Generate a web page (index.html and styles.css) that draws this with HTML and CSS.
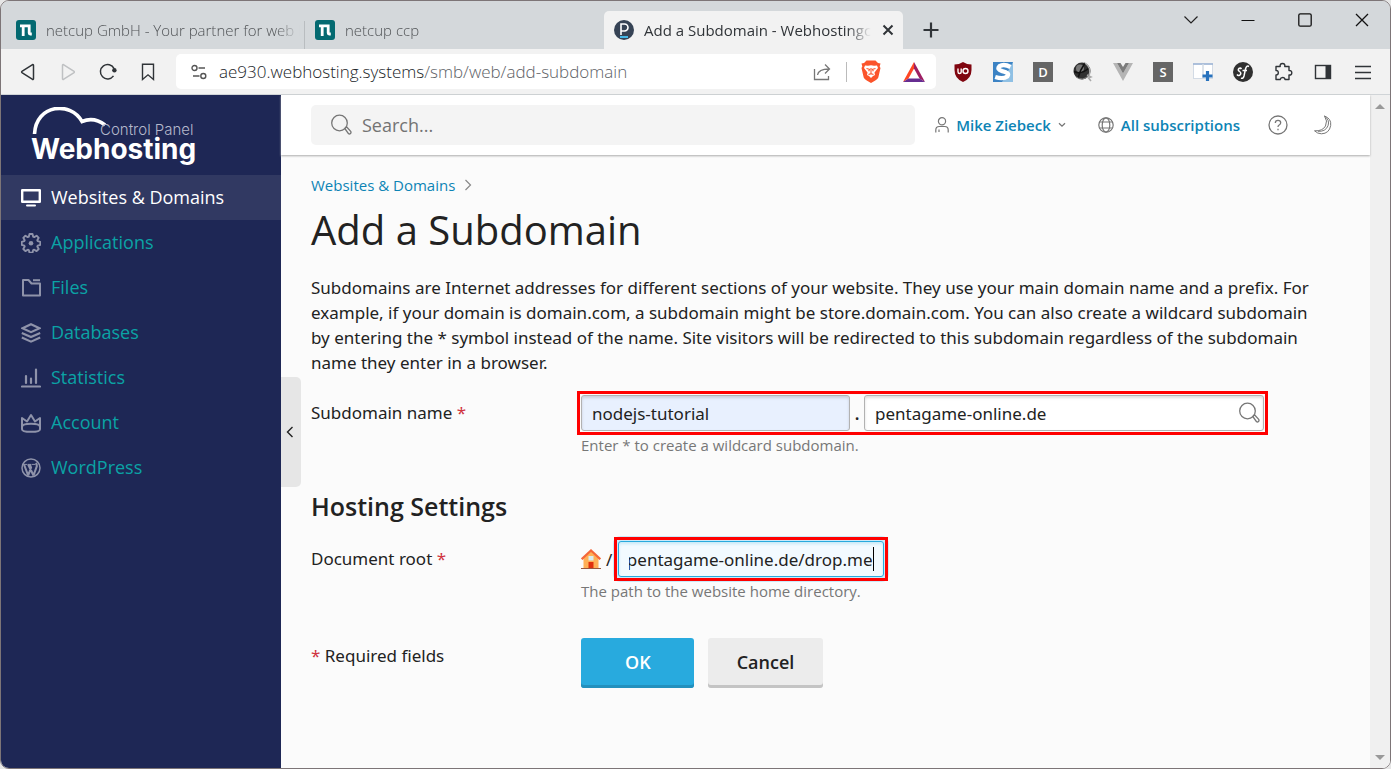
FILE: index.html
```html
<!DOCTYPE html>
<html lang="en">
<head>
<meta charset="utf-8">
<title>Add a Subdomain - Webhosting</title>
<link rel="stylesheet" href="styles.css">
</head>
<body>
<div class="window">
  <header class="tabstrip">
    <div class="tab">
      <svg class="favicon" viewBox="0 0 20 20"><rect width="20" height="20" rx="3" fill="#046a71"/><path d="M4 5.800h9.200v7.200q0 1 1 1h1.600M7.200 5.800V16" fill="none" stroke="#fff" stroke-width="2.800"/></svg>
      <span class="tab-title">netcup GmbH - Your partner for web h</span>
    </div>
    <div class="tab tab-second">
      <svg class="favicon" viewBox="0 0 20 20"><rect width="20" height="20" rx="3" fill="#046a71"/><path d="M4 5.800h9.200v7.200q0 1 1 1h1.600M7.200 5.800V16" fill="none" stroke="#fff" stroke-width="2.800"/></svg>
      <span class="tab-title">netcup ccp</span>
    </div>
    <div class="tab tab-active">
      <svg class="favicon" viewBox="0 0 20 20"><circle cx="10" cy="10" r="10" fill="#364355"/><path d="M7 15V4h3.500a3.300 3.300 0 0 1 0 7H7" fill="none" stroke="#fff" stroke-width="1.600"/><path d="M6 17h8" stroke="#45b8e8" stroke-width="2"/></svg>
      <span class="tab-title">Add a Subdomain - Webhostingc</span>
      <button class="plain tab-close" aria-label="Close tab"><svg width="12" height="12" viewBox="0 0 12 12"><path d="M1.500 1.500l9 9m0-9l-9 9" stroke="#303438" stroke-width="2"/></svg></button>
    </div>
    <button class="plain new-tab" aria-label="New tab"><svg width="16" height="16" viewBox="0 0 16 16"><path d="M8 .500v15M.500 8h15" stroke="#303438" stroke-width="2.200"/></svg></button>
    <div class="window-controls">
      <button class="plain" aria-label="Search tabs"><svg width="14" height="14" viewBox="0 0 14 14"><path d="M.500 3.500L7 10l6.500-6.500" fill="none" stroke="#222" stroke-width="1.200"/></svg></button>
      <button class="plain" aria-label="Minimize"><svg width="14" height="14" viewBox="0 0 14 14"><path d="M.500 7.500h13" stroke="#111" stroke-width="1.200"/></svg></button>
      <button class="plain" aria-label="Maximize"><svg width="14" height="14" viewBox="0 0 14 14"><rect x=".8" y=".8" width="12.400" height="12.400" rx="1.500" fill="none" stroke="#111" stroke-width="1.300"/></svg></button>
      <button class="plain" aria-label="Close window"><svg width="14" height="14" viewBox="0 0 14 14"><path d="M1 1l12 12M13 1L1 13" stroke="#111" stroke-width="1.300"/></svg></button>
    </div>
  </header>

  <div class="toolbar">
    <div class="nav-buttons">
      <button class="plain" aria-label="Back"><svg width="20" height="20" viewBox="0 0 20 20"><path d="M14.200 2.800L4.300 9q-1.400 1 0 2l9.900 6.200q1.300.6 1.300-.8V3.600q0-1.400-1.300-.8z" fill="none" stroke="#303438" stroke-width="1.500"/></svg></button>
      <button class="plain" aria-label="Forward"><svg width="20" height="20" viewBox="0 0 20 20"><path d="M5.800 2.800L15.700 9q1.400 1 0 2l-9.900 6.200q-1.300.6-1.300-.8V3.600q0-1.400 1.300-.8z" fill="none" stroke="#bfc1c3" stroke-width="1.500"/></svg></button>
      <button class="plain" aria-label="Reload"><svg width="20" height="20" viewBox="0 0 20 20"><path d="M15.500 13.900a7.200 7.200 0 1 1 .6-7.300" fill="none" stroke="#303438" stroke-width="1.500"/><circle cx="16.400" cy="8.300" r="2.200" fill="#303438"/></svg></button>
      <button class="plain" aria-label="Bookmark"><svg width="20" height="20" viewBox="0 0 20 20"><path d="M4.500 2.300h11v15.200L10 12.800l-5.500 4.700z" fill="none" stroke="#303438" stroke-width="1.400"/></svg></button>
    </div>
    <div class="address">
      <svg width="16" height="16" viewBox="0 0 16 16"><g fill="none" stroke="#555" stroke-width="1.400"><circle cx="3.500" cy="4" r="2.500"/><path d="M7.500 4H14M2 12h6.500"/><circle cx="12.300" cy="12" r="2.500"/></g></svg>
      <div class="url">ae930.webhosting.systems<span>/smb/web/add-subdomain</span></div>
      <button class="plain" aria-label="Share"><svg width="20" height="20" viewBox="0 0 20 20"><path d="M2.500 7v10.500h14V14M5.500 13q1-6 11.500-6M13 2.500L17.500 7 13 11.500" fill="none" stroke="#777" stroke-width="1.300"/></svg></button>
      <i class="address-rule"></i>
      <button class="plain" aria-label="Brave Shields"><svg width="20" height="23" viewBox="0 0 20 23"><path d="M5.500.500h9L17 3l2.500.5-.8 3 .8 1.500-2.200 9.500q-.5 1.500-3 3L10 23l-4.300-2.500q-2.500-1.500-3-3L.500 8l.8-1.500-.8-3L3 3z" fill="#fb542b"/><path d="M4 5.500l3 .3 3-.6 3 .6 3-.3 1 2.500-3.500 4.500.5 2.500-2 1-2 2-2-2-2-1 .5-2.500L3 8z" fill="#fff"/><path d="M5.500 8.500l3 .8-.8 2M14.500 8.500l-3 .8.800 2M7.500 14.500L10 13.700l2.500.8M10 8v5" fill="none" stroke="#fb542b" stroke-width="1.100"/></svg></button>
      <button class="plain" aria-label="Rewards"><svg width="22" height="20" viewBox="0 0 22 20"><path d="M11 0L0 20l5.500-3.500L11 6.500z" fill="#ff4724"/><path d="M11 0l11 20-5.500-3.500L11 6.500z" fill="#9e1f63"/><path d="M0 20h22l-5.500-3.500h-11z" fill="#662d91"/></svg></button>
    </div>
    <div class="extensions">
      <button class="plain" aria-label="uBlock Origin"><svg width="20" height="20" viewBox="0 0 20 20"><path d="M10 0q4 2.500 8.500 2.500V8q0 8.500-8.500 12Q1.500 16.500 1.500 8V2.500Q6 2.500 10 0z" fill="#800610"/><path d="M5 6.500v3.200q0 1.800 1.600 1.800t1.600-1.800V6.500v4" fill="none" stroke="#fff" stroke-width="1.400"/><circle cx="12.500" cy="9" r="2.500" fill="none" stroke="#fff" stroke-width="1.400"/></svg></button>
      <button class="plain" aria-label="Stylus"><svg width="20" height="20" viewBox="0 0 20 20"><rect width="20" height="20" fill="#3c83c4"/><path d="M20 0v20H9z" fill="#8fc0e4"/><path d="M17.500 5Q11 1.500 6.500 4.200q-3 3.200 2.700 5 8 1.600 5 5.300-4 3-12 .5" fill="none" stroke="#fff" stroke-width="4.400"/></svg></button>
      <button class="plain letter" aria-label="D extension">D</button>
      <button class="plain" aria-label="Globe extension"><svg width="20" height="20" viewBox="0 0 20 20"><circle cx="9" cy="9" r="8.500" fill="#303030"/><circle cx="7" cy="6.500" r="4" fill="#777"/><path d="M1 9.500Q8 13 16 6M5 16Q7 8 12 1" fill="none" stroke="#111" stroke-width="1.500"/><path d="M12 1q7 5 4 13M14 13l4 2-2.500 1 2.500 3" fill="none" stroke="#aaa" stroke-width="1.500"/><path d="M3 15q7 5 13-2" fill="none" stroke="#888"/></svg></button>
      <button class="plain" aria-label="Vue devtools"><svg width="20" height="20" viewBox="0 0 20 20"><path d="M0 1h4l6 10.500L16 1h4L10 19z" fill="#b5b5b5"/><path d="M4 1h3.500L10 5l2.500-4H16l-6 10.500z" fill="#7c7c7c"/></svg></button>
      <button class="plain letter" aria-label="S extension">S</button>
      <button class="plain" aria-label="Add panel"><svg width="20" height="20" viewBox="0 0 20 20"><rect x=".5" y="2" width="19" height="14.500" fill="#fff" stroke="#d3dbe5"/><path d="M0 2h20" stroke="#9ab2d5" stroke-width="1.500"/><path d="M10 2v14" stroke="#d3dbe5" stroke-width="1.500"/><path d="M14.500 9v10M9.500 14h10" stroke="#2872bd" stroke-width="3.200"/></svg></button>
      <button class="plain" aria-label="Symfony"><svg width="20" height="20" viewBox="0 0 20 20"><circle cx="10" cy="10" r="10" fill="#303030"/><path d="M8.500 7q-1-1.500-2.600-.5-1.500 1.500.6 3 2.500 1.700.3 3.600-1.800 1-2.800-.6M16 4.500q-2.500-1.500-3.500 2.500L11 14q-.8 3-3 2.200M9.500 8.500H14" fill="none" stroke="#fff" stroke-width="1.500"/></svg></button>
      <button class="plain" aria-label="Extensions"><svg width="20" height="20" viewBox="0 0 20 20"><path d="M3 4.500h4.200q-.5-3 2.300-3t2.300 3H16v4q2.800-.2 2.800 2.300T16 13v4.500h-4q-.2-2-2.300-2t-2.500 2H3V13q2.300 0 2.300-2.300T3 8.500z" fill="none" stroke="#303438" stroke-width="1.400" stroke-linejoin="round"/></svg></button>
      <button class="plain" aria-label="Sidebar"><svg width="20" height="20" viewBox="0 0 20 20"><rect x="2.500" y="3.500" width="15" height="13" fill="none" stroke="#303438" stroke-width="1.400"/><path d="M12.500 3H18v14h-5.500z" fill="#303438"/></svg></button>
      <button class="plain" aria-label="Menu"><svg width="20" height="20" viewBox="0 0 20 20"><path d="M2 4.500h16M2 10.500h16M2 16.500h16" stroke="#303438" stroke-width="1.300"/></svg></button>
    </div>
  </div>

  <div class="page">
    <aside class="sidebar">
      <div class="logo">
        <svg class="logo-cloud" width="76" height="28" viewBox="0 0 76 28"><path d="M2.500 27C4 -3 39 -6 50 14.500Q62 9.500 73 18" fill="none" stroke="#fff" stroke-width="3.600"/></svg>
        <span class="logo-sub">Control Panel</span>
        <span class="logo-name">Webhosting</span>
      </div>
      <nav class="menu">
        <a class="current" href="#"><svg viewBox="0 0 20 20"><path d="M1.200 2.200h17.600v11.600H1.200z" fill="none" stroke="currentColor" stroke-width="2.400" stroke-linejoin="round"/><path d="M6 17.500h8" stroke="currentColor" stroke-width="2" stroke-linecap="round"/></svg>Websites &amp; Domains</a>
        <a href="#"><svg viewBox="0 0 20 20"><path d="M8.500 1h3l.7 2.700 1 .4 2.400-1.400 2.100 2.100-1.400 2.400.4 1 2.600.7v3l-2.600.7-.4 1 1.400 2.400-2.100 2.100-2.400-1.400-1 .4-.7 2.600h-3l-.7-2.600-1-.4-2.400 1.400L2.300 16l1.400-2.400-.4-1L.700 11.900v-3l2.600-.7.4-1L2.300 4.800l2.100-2.100 2.400 1.400 1-.4z" fill="none" stroke="currentColor" stroke-width="1.900" stroke-linejoin="round"/><circle cx="10" cy="10.300" r="2.300" fill="currentColor"/></svg>Applications</a>
        <a href="#"><svg viewBox="0 0 20 20"><path d="M2 2h5.500l3 3.500H19V17.500H2z" fill="none" stroke="currentColor" stroke-width="2" stroke-linejoin="round"/><path d="M12 2.200h7" stroke="currentColor" stroke-width="2"/></svg>Files</a>
        <a href="#"><svg viewBox="0 0 20 20"><path d="M10 1.200l8.500 4-8.500 4-8.500-4zM.800 10L10 14l9.200-4M.800 14.500L10 18.700l9.200-4.200" fill="none" stroke="currentColor" stroke-width="2.100"/></svg>Databases</a>
        <a href="#"><svg viewBox="0 0 20 20"><path d="M1 18.500h18M5 15V8M10 15v-4.500M15 15V1.500" fill="none" stroke="currentColor" stroke-width="2.200" stroke-linecap="round"/></svg>Statistics</a>
        <a href="#"><svg viewBox="0 0 20 20"><path d="M1 14V5l5 3.500L10 2l4 6.500L19 5v9M1 14c0-4.500 18-4.500 18 0v2.200c0 3.500-18 3.500-18 0z" fill="none" stroke="currentColor" stroke-width="2" stroke-linejoin="round"/></svg>Account</a>
        <a href="#"><svg viewBox="0 0 20 20"><circle cx="10" cy="10" r="9" fill="none" stroke="currentColor" stroke-width="1.500"/><path d="M3 6.500l4.200 11M7.200 17.500L10 9.500 8.800 6.500M7.200 6.500l5.300 11M12.500 17.500l3.300-9.200q.3-2-1-3.300" fill="none" stroke="currentColor" stroke-width="2.100"/><path d="M2 6.400h4M6.500 6.400h4M11 6.400h3.500" stroke="currentColor"/></svg>WordPress</a>
      </nav>
    </aside>

    <main class="content">
      <button class="plain collapse" aria-label="Collapse sidebar"><svg width="8" height="12" viewBox="0 0 8 12"><path d="M6.500 1L1.500 6l5 5" fill="none" stroke="#222" stroke-width="1.400"/></svg></button>
      <div class="topbar">
        <label class="search">
          <svg width="22" height="22" viewBox="0 0 22 22"><g fill="none" stroke="#777" stroke-width="1.300"><circle cx="9.500" cy="9" r="7.800"/><path d="M14.800 14.500l1.700-1.700 4.200 4.600q.7 1.200-.2 2.100t-2 .2z"/></g></svg>
          <input type="search" placeholder="Search..." aria-label="Search">
        </label>
        <a class="top-link user" href="#"><svg width="14" height="16" viewBox="0 0 14 16"><g fill="none" stroke="#777" stroke-width="1.200"><circle cx="7" cy="4.300" r="3.600"/><path d="M.800 15.500V13q0-3.500 3.400-3.500h5.600q3.400 0 3.400 3.500v2.500M4 12.500V15"/></g></svg>Mike Ziebeck<svg class="caret-down" width="8" height="6" viewBox="0 0 8 6"><path d="M1 1.200l3 3 3-3" fill="none" stroke="#777" stroke-width="1.300"/></svg></a>
        <a class="top-link subs" href="#"><svg width="16" height="16" viewBox="0 0 16 16"><g fill="none" stroke="#777" stroke-width="1.200"><circle cx="8" cy="8" r="7.200"/><ellipse cx="8" cy="8" rx="3.800" ry="7.200"/><path d="M1.500 5h13M1.500 11h13"/></g></svg>All subscriptions</a>
        <button class="plain" aria-label="Help"><svg width="20" height="20" viewBox="0 0 20 20"><g fill="none" stroke="#777" stroke-width="1.300"><circle cx="10" cy="10" r="9"/><path d="M7.300 8q0-2.700 2.700-2.700t2.700 2.500q0 1.300-1.500 2.200-1.200.7-1.200 2M10 13.700v1.500"/></g></svg></button>
        <button class="plain moon" aria-label="Dark mode"><svg width="20" height="20" viewBox="0 0 20 20"><path d="M11.500 1q7 2.500 6.200 9.500-1.400 8-9.200 8.300-4 0-7-3 8 .5 11-4.800 2.500-5-1-10zM11.500 1q5.500 4 3.500 9.800-2.500 6-10 5.500" fill="none" stroke="#777" stroke-width="1"/></svg></button>
      </div>

      <form class="body">
        <nav class="breadcrumb"><a href="#">Websites &amp; Domains</a><svg width="8" height="12" viewBox="0 0 8 12"><path d="M1.500 1l5 5-5 5" fill="none" stroke="#888" stroke-width="1.200"/></svg></nav>
        <h1>Add a Subdomain</h1>
        <p class="intro">Subdomains are Internet addresses for different sections of your website. They use your main domain name and a prefix. For example, if your domain is domain.com, a subdomain might be store.domain.com. You can also create a wildcard subdomain by entering the * symbol instead of the name. Site visitors will be redirected to this subdomain regardless of the subdomain name they enter in a browser.</p>

        <div class="row">
          <label for="name">Subdomain name <em>*</em></label>
          <div class="field">
            <div class="controls marked">
              <input class="box name" id="name" type="text" value="nodejs-tutorial">
              <span class="dot">.</span>
              <div class="domain">
                <input class="box" type="text" value="pentagame-online.de" aria-label="Parent domain">
                <svg width="22" height="22" viewBox="0 0 22 22"><g fill="none" stroke="#777" stroke-width="1.300"><circle cx="9.500" cy="9" r="7.800"/><path d="M14.800 14.500l1.700-1.700 4.200 4.600q.7 1.200-.2 2.100t-2 .2z"/></g></svg>
              </div>
            </div>
            <p class="hint">Enter * to create a wildcard subdomain.</p>
          </div>
        </div>

        <h2>Hosting Settings</h2>

        <div class="row">
          <label for="root">Document root <em>*</em></label>
          <div class="field">
            <div class="controls">
              <svg class="home" width="20" height="20" viewBox="0 0 20 20"><path d="M2.500 9L10 2l7.500 7v10h-15z" fill="#ffb057"/><path d="M.700 10.200L10 1.500l9.300 8.700" fill="none" stroke="#f4673a" stroke-width="2.200"/><path d="M7.500 7h5v4.500h-5z" fill="#d9edf0"/><path d="M7.500 13h5v6h-5z" fill="#e0310f"/><path d="M0 19.500h20" stroke="#98593f"/></svg>
              <span class="slash">/</span>
              <div class="root marked">
                <input class="box" id="root" type="text" value="nodejs-pentagame-online.de/drop.me">
                <i class="text-cursor"></i>
              </div>
            </div>
            <p class="hint">The path to the website home directory.</p>
          </div>
        </div>

        <div class="row actions">
          <span class="required"><em>*</em> Required fields</span>
          <div class="buttons">
            <button class="button ok" type="button">OK</button>
            <button class="button cancel" type="button">Cancel</button>
          </div>
        </div>
      </form>
    </main>

    <div class="scrollbar"><i class="arrow up"></i><i class="arrow down"></i></div>
  </div>
</div>
<script src="script.js"></script>
</body>
</html>
```
FILE: styles.css
```css
* { box-sizing: border-box; }
html, body { height: 100%; }
body {
  margin: 0;
  background: #e6e6e6;
  color: #222;
  font: 400 18px/25px "Open Sans", "Noto Sans", sans-serif;
}
a { color: #0d84b5; text-decoration: none; }
svg { display: block; flex: none; }
em { color: #d0343f; font-style: normal; }
.plain {
  display: flex;
  align-items: center;
  justify-content: center;
  padding: 0;
  border: 0;
  background: none;
}

.window {
  display: flex;
  flex-direction: column;
  min-height: 100vh;
  overflow: hidden;
  border: 1px solid #7d7577;
  border-radius: 9px;
}

/* Tabs */
.tabstrip {
  display: flex;
  flex: none;
  height: 48px;
  padding-top: 10px;
  background: #d4d8db;
}
.tab {
  display: flex;
  align-items: center;
  gap: 10px;
  width: 299px;
  padding: 0 5px 0 10px;
  color: #505356;
  font-size: 15px;
  font-weight: 300;
}
.tab:first-child { width: 304px; padding-left: 15px; background: linear-gradient(#b9bdc0, #b9bdc0) right bottom / 1px 28px no-repeat; }
.favicon { width: 20px; height: 20px; }
.tab-title {
  flex: 1;
  overflow: hidden;
  white-space: nowrap;
  mask-image: linear-gradient(to right, #000 calc(100% - 24px), transparent);
}
.tab-active {
  padding-right: 8px;
  border-radius: 5px 5px 0 0;
  background: #f2f2f2;
  color: #303438;
  font-weight: 400;
}
.tab-close { width: 14px; height: 20px; }
.new-tab { width: 30px; margin-left: 13px; }
.window-controls { display: flex; gap: 43px; height: 18px; margin-left: auto; padding-right: 21px; }

/* Address bar */
.toolbar {
  display: flex;
  align-items: center;
  flex: none;
  height: 46px;
  padding: 0 17px;
  border-bottom: 1px solid #d0d4d7;
  background: #f2f2f2;
}
.nav-buttons { display: flex; gap: 20px; margin-right: 18px; }
.address {
  display: flex;
  align-items: center;
  flex: 1;
  height: 35px;
  padding: 0 11px 0 15px;
  border-radius: 5px;
  background: #fff;
}
.url { flex: 1; margin-left: 12px; color: #202428; font-size: 17px; font-weight: 300; white-space: nowrap; }
.url span { color: #5d6166; }
.address-rule { width: 1px; height: 20px; margin: 0 14px; background: #bbb; }
.address .address-rule + .plain { margin-right: 22px; }
.extensions { display: flex; gap: 20px; margin-left: 17px; }
.letter {
  width: 20px;
  height: 20px;
  background: #666;
  color: #fff;
  font: 600 13px/20px "Open Sans", sans-serif;
}

/* Page */
.page { display: flex; flex: 1; background: #fbfbfb; }
.sidebar { flex: none; width: 280px; background: #1e2755; }
.logo { position: relative; height: 80px; color: #fff; white-space: nowrap; }
.logo-cloud { position: absolute; left: 31px; top: 12px; }
.logo-sub { position: absolute; left: 99px; top: 28px; color: #b4b8cb; font: 300 15px/14px Inter, sans-serif; }
.logo-name { position: absolute; left: 30px; top: 42px; font: 700 28px/24px Inter, sans-serif; }
.menu a {
  display: flex;
  align-items: center;
  gap: 10px;
  height: 45px;
  padding-left: 20px;
  color: #0ba3a5;
}
.menu svg { width: 20px; height: 20px; color: #8f93aa; }
.menu .current { background: #313962; color: #fff; }
.menu .current svg { color: #fff; }

.content { position: relative; flex: 1; min-width: 0; }
.collapse {
  position: absolute;
  left: 0;
  top: 282px;
  width: 20px;
  height: 110px;
  padding-right: 2px;
  border-radius: 0 5px 5px 0;
  background: #e6e6e6;
}
.topbar {
  display: flex;
  align-items: center;
  height: 60px;
  padding: 0 37px 0 30px;
  background: #fff;
  box-shadow: 0 1px 2px #aaa;
}
.search {
  display: flex;
  align-items: center;
  gap: 8px;
  flex: 1;
  min-width: 0;
  height: 40px;
  padding-left: 19px;
  border-radius: 5px;
  background: #f4f4f4;
}
.search input { flex: 1; min-width: 0; border: 0; background: none; font: inherit; }
.search input::placeholder { color: #737373; }
.top-link { display: flex; align-items: center; gap: 7px; font-size: 15px; font-weight: 600; white-space: nowrap; }
.user { margin-left: 20px; }
.subs { margin: 0 28px 0 32px; }
.moon { margin-left: 25px; }

.body { padding: 20px 29px 20px 30px; font-family: "Noto Sans", "Open Sans", sans-serif; font-size: 17px; }
.breadcrumb { display: flex; align-items: center; gap: 9px; font-family: "Open Sans", sans-serif; font-size: 15px; line-height: 20px; }
h1 { margin: 10px 0 20px; font-family: "Open Sans", sans-serif; font-size: 40px; font-weight: 400; line-height: 50px; }
h2 { margin: 36px 0 20px; font-family: "Open Sans", sans-serif; font-size: 25px; font-weight: 600; line-height: 30px; }
.intro { margin: 0 20px 20px 0; }
.row { display: flex; }
.row > label, .required { flex: none; width: 270px; padding-top: 5px; }
.controls { display: flex; align-items: center; height: 36px; }
.hint { margin: 4px 0 0; color: #777; font-family: "Open Sans", sans-serif; font-size: 15px; line-height: 20px; }
.box {
  width: 100%;
  height: 36px;
  padding: 0 10px;
  border: 1px solid #b2b2b2;
  border-radius: 3px;
  outline: 0;
  background: #fff;
  box-shadow: inset 0 2px 3px #0002;
  color: #222;
  font: inherit;
}
.name { width: 269px; background: #e8f0fe; }
.dot { width: 14px; text-align: center; font-weight: 600; }
.domain { position: relative; width: 400px; }
.domain svg { position: absolute; right: 4px; top: 7px; }
.marked { position: relative; width: fit-content; }
.marked::after {
  content: "";
  position: absolute;
  inset: -4px;
  border: 3px solid #f00;
  pointer-events: none;
}
.slash { width: 17px; padding-left: 5px; }
.root.marked { width: 266px; }
.root .box { display: block; border-color: #28aade; background: #f2faff; box-shadow: 0 0 0 5px #c9eafa, inset 0 2px 3px #28aade33; }
.text-cursor { position: absolute; right: 10px; top: 6px; width: 1px; height: 24px; background: #000; }

.actions { margin-top: 37px; }
.buttons { display: flex; gap: 14px; }
.button {
  height: 50px;
  padding: 0 29px 2px;
  border: 0;
  border-radius: 3px;
  background: #ececec;
  box-shadow: inset 0 -3px #c4c4c4;
  color: #222;
  font: 600 18px/25px "Open Sans", sans-serif;
}
.ok { padding: 0 43px 2px 44px; background: #28aade; box-shadow: inset 0 -3px #2390bd; color: #fff; }

.scrollbar {
  display: flex;
  flex-direction: column;
  align-items: center;
  justify-content: space-between;
  flex: none;
  width: 20px;
  padding: 9px 0 8px;
  background: #f0f0f0;
}
.arrow { border: 5px solid transparent; }
.up { border-top: 0; border-bottom-color: #999; }
.down { border-bottom: 0; border-top-color: #999; }
```
FILE: script.js
```js
// Show the end of the path when it is longer than its box.
const root = document.getElementById('root');
root.scrollLeft = root.scrollWidth;
```
